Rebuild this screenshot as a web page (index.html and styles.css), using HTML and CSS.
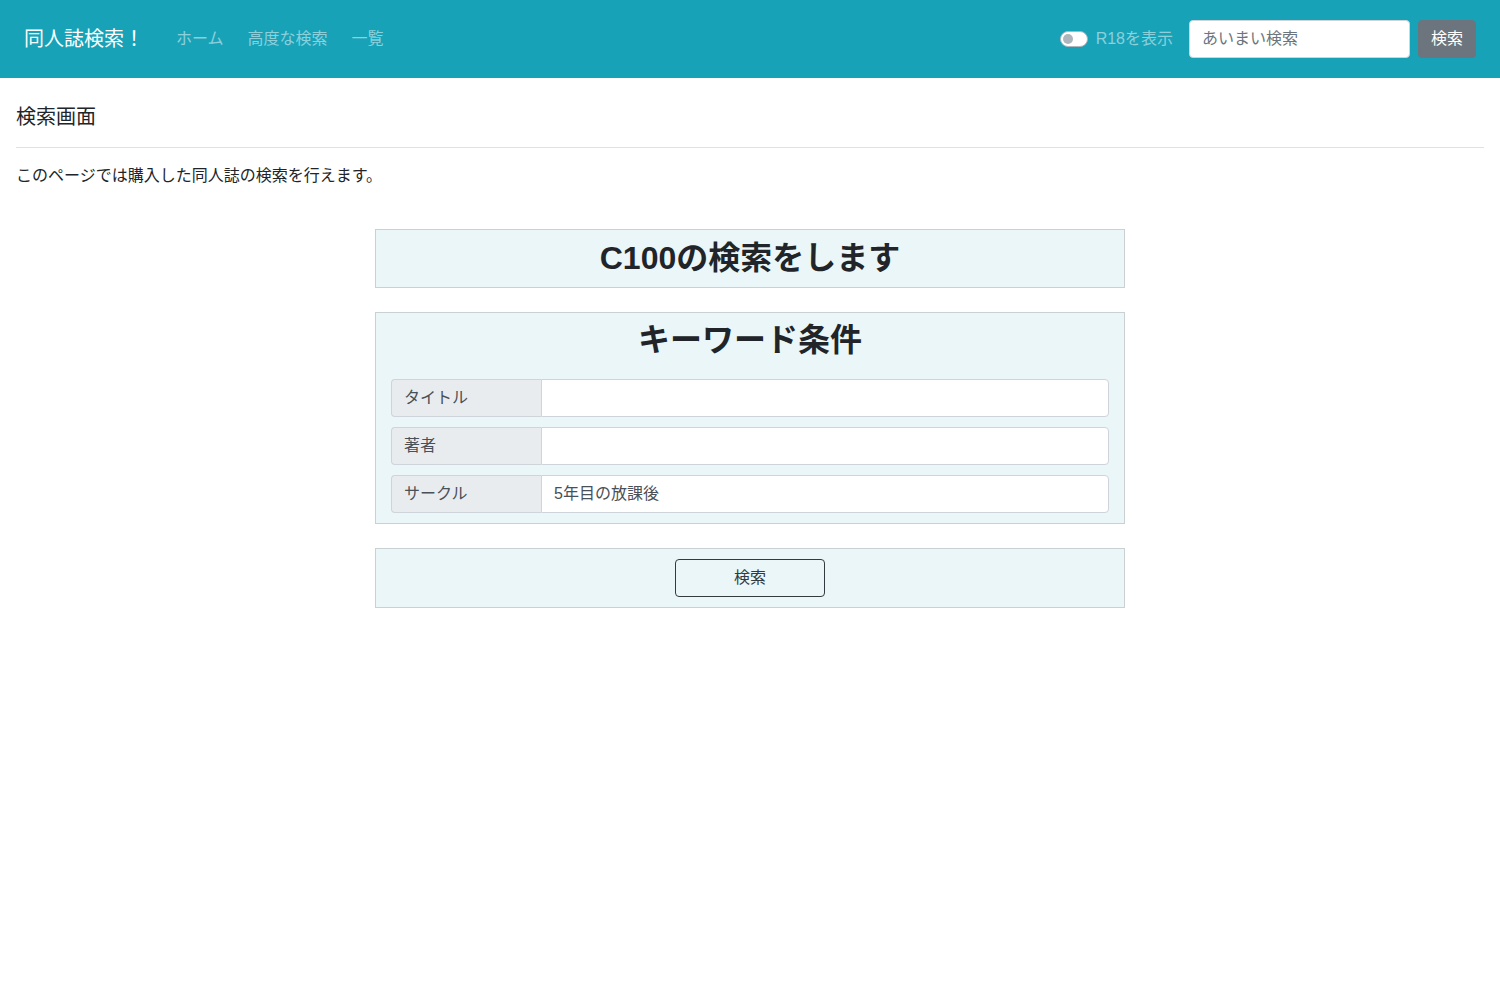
FILE: index.html
```html
<!DOCTYPE html>
<html lang="ja">
<head>
<meta charset="utf-8">
<title>同人誌検索！</title>
<link rel="stylesheet" href="styles.css">
</head>
<body>
<nav class="navbar">
  <a class="brand" href="#">同人誌検索！</a>
  <ul class="nav-links">
    <li><a href="#">ホーム</a></li>
    <li><a href="#">高度な検索</a></li>
    <li><a href="#">一覧</a></li>
  </ul>
  <div class="nav-right">
    <label class="switch">
      <span class="switch-track"><span class="switch-knob"></span></span>
      <span class="switch-label">R18を表示</span>
    </label>
    <input class="nav-search" type="text" placeholder="あいまい検索">
    <button class="btn-secondary" type="button">検索</button>
  </div>
</nav>
<main class="main">
  <h5 class="page-title">検索画面</h5>
  <hr class="divider">
  <p class="lead-text">このページでは購入した同人誌の検索を行えます。</p>

  <section class="box box-head">
    <h3 class="box-title-sm">C100の検索をします</h3>
  </section>

  <section class="box box-keyword">
    <h2 class="box-title">キーワード条件</h2>
    <div class="input-group">
      <span class="input-label">タイトル</span>
      <input class="input-field" type="text" value="">
    </div>
    <div class="input-group">
      <span class="input-label">著者</span>
      <input class="input-field" type="text" value="">
    </div>
    <div class="input-group">
      <span class="input-label">サークル</span>
      <input class="input-field" type="text" value="5年目の放課後">
    </div>
  </section>

  <section class="box box-submit">
    <button class="btn-outline" type="button">検索</button>
  </section>
</main>
</body>
</html>
```

FILE: styles.css
```css
* { box-sizing: border-box; }
html, body { margin: 0; padding: 0; }
body {
  font-family: "Liberation Sans", "Noto Sans CJK JP", sans-serif;
  font-size: 16px;
  line-height: 1.5;
  color: #212529;
  background: #fff;
}

.navbar {
  height: 78px;
  background: #17a2b8;
  display: flex;
  align-items: center;
  padding: 0 24px;
}
.brand {
  color: #fff;
  font-size: 20px;
  text-decoration: none;
  margin-right: 24px;
}
.nav-links {
  list-style: none;
  display: flex;
  margin: 0;
  padding: 0;
  gap: 8px;
}
.nav-links a {
  display: block;
  padding: 8px;
  color: rgba(255,255,255,0.5);
  text-decoration: none;
  font-size: 16px;
}
.nav-right {
  margin-left: auto;
  display: flex;
  align-items: center;
}
.switch {
  display: flex;
  align-items: center;
  margin-right: 16px;
}
.switch-track {
  position: relative;
  width: 28px;
  height: 16px;
  border-radius: 8px;
  background: #fff;
  border: 1px solid #adb5bd;
  margin-right: 8px;
}
.switch-knob {
  position: absolute;
  left: 2px;
  top: 2px;
  width: 10px;
  height: 10px;
  border-radius: 50%;
  background: #adb5bd;
}
.switch-label {
  color: rgba(255,255,255,0.5);
  font-size: 16px;
}
.nav-search {
  width: 221px;
  height: 38px;
  border: 1px solid #ced4da;
  border-radius: 4px;
  padding: 6px 12px;
  font: inherit;
  font-size: 16px;
  color: #495057;
  margin-right: 8px;
}
.nav-search::placeholder { color: #6c757d; }
.btn-secondary {
  height: 38px;
  padding: 0 12px;
  background: #6c757d;
  color: #fff;
  border: 1px solid #6c757d;
  border-radius: 4px;
  font: inherit;
  font-size: 16px;
}

.main {
  padding: 27px 16px 0;
}
.page-title {
  font-size: 20px;
  font-weight: normal;
  line-height: 1.2;
  margin: 0 0 18px;
}
.divider {
  border: 0;
  border-top: 1px solid #dee2e6;
  margin: 0 0 15px;
}
.lead-text {
  margin: 0 0 42px;
  font-size: 16px;
  position: relative;
  top: 1px;
}

.box {
  width: 750px;
  margin: 0 auto 24px;
  background: #eaf6f7;
  border: 1px solid #c9d1d3;
}
.box-head {
  padding: 9px 15px 9px;
  height: 59px;
  text-align: center;
}
.box-title-sm {
  margin: 0;
  font-size: 32px;
  font-weight: bold;
  line-height: 1.2;
}
.box-keyword {
  padding: 8px 15px 10px;
}
.box-title {
  text-align: center;
  margin: 0 0 20px;
  font-size: 32px;
  font-weight: bold;
  line-height: 1.2;
}
.input-group {
  display: flex;
  height: 38px;
  margin-bottom: 10px;
}
.input-group:last-child { margin-bottom: 0; }
.input-label {
  width: 150px;
  flex: none;
  display: flex;
  align-items: center;
  padding: 0 12px;
  background: #e9ecef;
  border: 1px solid #ced4da;
  border-right: 0;
  border-radius: 4px 0 0 4px;
  color: #495057;
  font-size: 16px;
}
.input-field {
  flex: 1;
  min-width: 0;
  height: 38px;
  border: 1px solid #ced4da;
  border-radius: 0 4px 4px 0;
  padding: 4px 12px 8px;
  font: inherit;
  font-size: 16px;
  color: #495057;
  background: #fff;
}
.box-submit {
  padding: 10px;
  display: flex;
  justify-content: center;
}
.btn-outline {
  width: 150px;
  height: 38px;
  background: transparent;
  border: 1px solid #343a40;
  border-radius: 4px;
  color: #343a40;
  font: inherit;
  font-size: 16px;
}
```
